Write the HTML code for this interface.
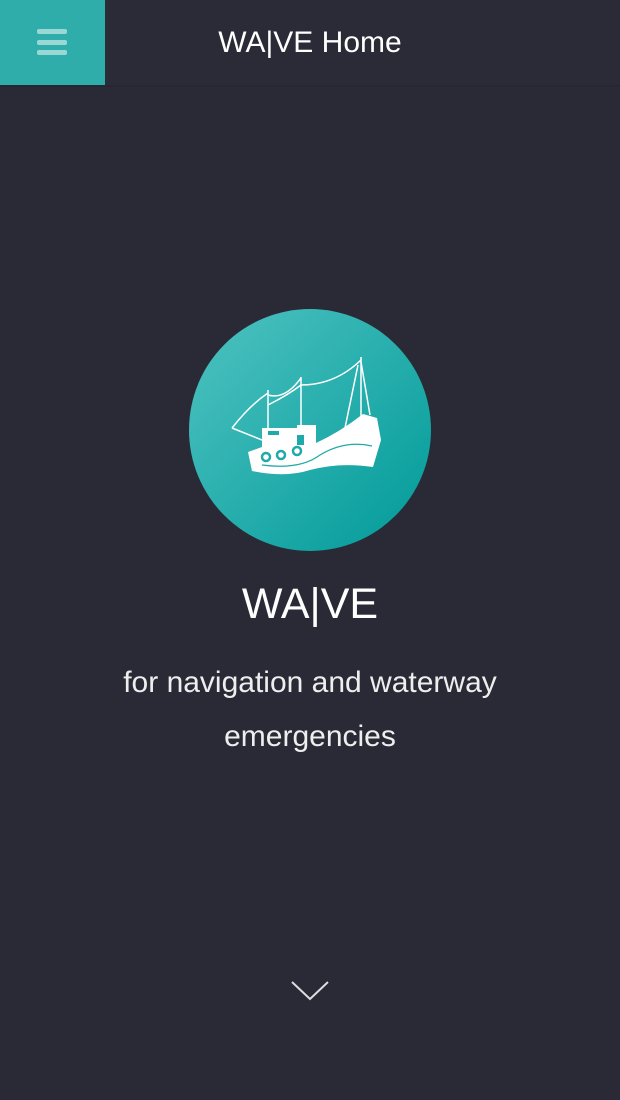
<!DOCTYPE html>
<html><head><meta charset="utf-8"><style>
html,body{margin:0;padding:0;width:620px;height:1100px;background:#292a36;overflow:hidden;font-family:"Liberation Sans",sans-serif;color:#fff}
.hdr{position:absolute;left:0;top:0;width:620px;height:85px;background:#2a2b37;border-bottom:2px solid #262732}
.menu{position:absolute;left:0;top:0;width:105px;height:85px;background:#2eadab}
.bar{position:absolute;left:37px;width:30px;height:5px;border-radius:2px;background:#9ad8d6}
.title{position:absolute;left:0;width:620px;top:26px;text-align:center;font-size:30px;font-weight:300}
.big{position:absolute;left:0;width:620px;top:580px;text-align:center;font-size:43px}
.sub{position:absolute;left:0;width:620px;top:656px;text-align:center;font-size:30px;line-height:54px;color:#eee}
</style></head><body>
<div class="hdr"></div>
<div class="menu"><div class="bar" style="top:29px"></div><div class="bar" style="top:40px"></div><div class="bar" style="top:50px"></div></div>
<div class="title">WA|VE Home</div>
<svg width="620" height="1100" style="position:absolute;left:0;top:0">
<defs><linearGradient id="g" x1="0" y1="0" x2="1" y2="1"><stop offset="0" stop-color="#4fc3c2"/><stop offset="1" stop-color="#009a98"/></linearGradient></defs>
<circle cx="310" cy="430" r="121" fill="url(#g)"/>
<g stroke="#fff" fill="none" stroke-width="1.5">
<path d="M268 390V445M301 377V430M361 357V418"/>
<path d="M232 428Q250 405 268 393M232 428L262 440M268 395Q285 400 301 378M268 405Q288 395 301 385M301 385Q335 385 361 360M345 428L358 365M361 362L370 415"/>
</g>
<path d="M248 452L262 447L262 428L297 428L297 425L316 425L316 443Q340 432 363 414L377 418L381 440L373 467Q340 462 310 470Q285 478 252 471Z" fill="#fff"/>
<path d="M262 465Q300 470 320 455Q345 440 372 446" stroke="#1eaaa8" stroke-width="1.2" fill="none"/>
<rect x="268" y="431" width="11" height="4" fill="#1eaaa8"/>
<rect x="297" y="435" width="7" height="10" fill="#1eaaa8"/>
<g fill="none" stroke="#1eaaa8" stroke-width="2.5"><circle cx="266" cy="457" r="4"/><circle cx="281" cy="455" r="4"/><circle cx="297" cy="451" r="4"/></g>
<path d="M292 982L310 999L328 982" stroke="#ddd" stroke-width="2" fill="none"/>
</svg>
<div class="big">WA|VE</div>
<div class="sub">for navigation and waterway<br>emergencies</div>
</body></html>
